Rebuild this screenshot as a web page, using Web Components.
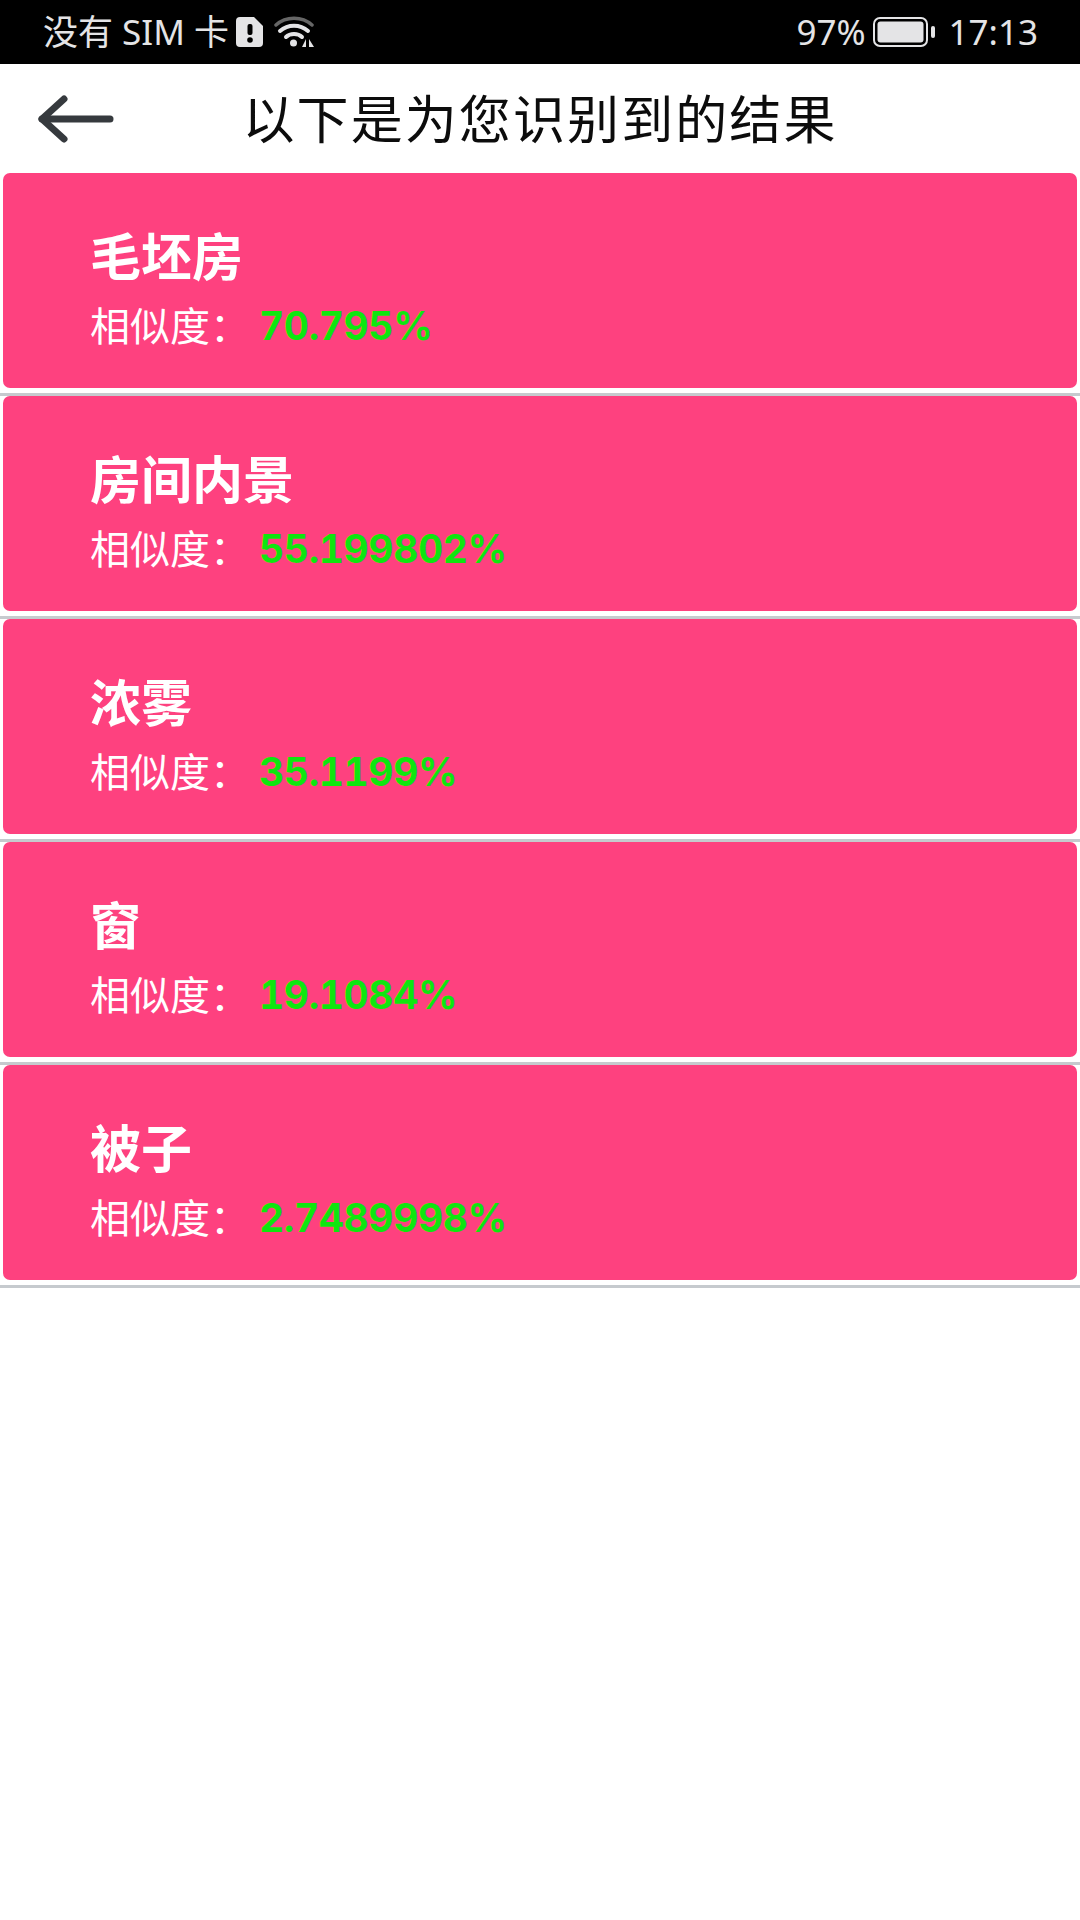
<!DOCTYPE html>
<html lang="zh-CN">
<head>
<meta charset="utf-8">
<style>
  html, body { margin: 0; padding: 0; background: #fff; }
  body { width: 1080px; min-height: 1920px; font-family: "Noto Sans", "Noto Sans CJK SC", sans-serif; }
</style>
</head>
<body>
<status-bar></status-bar>
<title-bar>以下是为您识别到的结果</title-bar>
<result-list>
  <result-item name="毛坯房" score="70.795%"></result-item>
  <result-item name="房间内景" score="55.199802%"></result-item>
  <result-item name="浓雾" score="35.1199%"></result-item>
  <result-item name="窗" score="19.1084%"></result-item>
  <result-item name="被子" score="2.7489998%"></result-item>
</result-list>
<script>
class StatusBar extends HTMLElement {
  constructor() {
    super();
    this.attachShadow({mode: 'open'});
  }

  connectedCallback() {
    this.shadowRoot.innerHTML = `
      <style>
        :host {
          display: flex;
          align-items: center;
          height: 64px;
          padding: 0 42px 0 43px;
          background: #000;
          color: #e4e4e6;
          font-size: 35px;
          line-height: 64px;
        }
        .left, .right { display: flex; align-items: center; }
        .right { margin-left: auto; }
        svg { display: block; }
        .sim { margin-left: 7px; }
        .wifi { margin-left: 10px; }
        .bat { margin: 0 14px 0 7px; }
      </style>
      <div class="left">
        <span>没有 SIM 卡</span>
        <svg class="sim" width="28" height="30" viewBox="0 0 28 30">
          <path d="M4 0H18L27 9V26a4 4 0 0 1-4 4H4a4 4 0 0 1-4-4V4a4 4 0 0 1 4-4Z" fill="#e4e4e6"/>
          <rect x="11.500" y="7" width="5" height="11" rx="2" fill="#000"/>
          <circle cx="14" cy="23" r="2.800" fill="#000"/>
        </svg>
        <svg class="wifi" width="42" height="32" viewBox="0 0 42 32" fill="none">
          <path d="M2 9C12 0 28 0 38 9" stroke="#666" stroke-width="3.500" stroke-linecap="round"/>
          <path d="M6 15C14 8 26 8 34 15" stroke="#e4e4e6" stroke-width="4" stroke-linecap="round"/>
          <path d="M12 21C16 17 24 17 28 21" stroke="#e4e4e6" stroke-width="4" stroke-linecap="round"/>
          <circle cx="19.500" cy="27" r="3.500" fill="#e4e4e6"/>
          <path d="M32 23V31H28Z" fill="#e4e4e6"/>
          <path d="M35 23V31H40Z" fill="#e4e4e6"/>
        </svg>
      </div>
      <div class="right">
        <span>97%</span>
        <svg class="bat" width="62" height="30" viewBox="0 0 62 30" fill="none">
          <rect x="1" y="1" width="53" height="28" rx="6" stroke="#e4e4e6" stroke-width="2"/>
          <rect x="4.500" y="4.500" width="46" height="21" rx="3" fill="#e4e4e6"/>
          <rect x="58" y="9" width="4" height="12" rx="2" fill="#e4e4e6"/>
        </svg>
        <span>17:13</span>
      </div>`;
  }
}

class TitleBar extends HTMLElement {
  constructor() {
    super();
    this.attachShadow({mode: 'open'});
  }

  connectedCallback() {
    this.shadowRoot.innerHTML = `
      <style>
        :host {
          display: grid;
          grid-template-columns: 1fr auto 1fr;
          align-items: center;
          height: 109px;
          background: #fff;
          color: #0c0c0c;
        }
        svg { display: block; margin-left: 38px; }
        .title { font-size: 52px; letter-spacing: 2.100px; line-height: 109px; }
      </style>
      <svg width="76" height="48" viewBox="0 0 76 48" fill="none" stroke="#363a3e" stroke-width="7" stroke-linecap="round" stroke-linejoin="round">
        <path d="M26 4L4 24L26 44"/>
        <path d="M4 24H72"/>
      </svg>
      <div class="title"><slot></slot></div>
      <div></div>`;
  }
}

class ResultList extends HTMLElement {
  constructor() {
    super();
    this.attachShadow({mode: 'open'});
  }

  connectedCallback() {
    this.shadowRoot.innerHTML = `
      <style>
        :host { display: block; }
      </style>
      <slot></slot>`;
  }
}

class ResultItem extends HTMLElement {
  constructor() {
    super();
    this.attachShadow({mode: 'open'});
  }

  connectedCallback() {
    this.shadowRoot.innerHTML = `
      <style>
        :host {
          display: block;
          height: 223px;
          box-sizing: border-box;
          border-bottom: 3px solid #c6cace;
          padding: 0 3px;
        }
        .card {
          box-sizing: border-box;
          height: 215px;
          padding: 53px 0 0 87px;
          background: #fe417f;
          border-radius: 7px;
          color: #fff;
        }
        .name { font-size: 51px; font-weight: 700; line-height: 60px; }
        .line { display: flex; align-items: center; margin-top: 13px; font-size: 40px; line-height: 54px; }
        .score {
          margin-left: 9px;
          color: #0fe60f;
          font-size: 39px;
          font-weight: 700;
          font-family: Inter, sans-serif;
          font-variant-numeric: tabular-nums;
          letter-spacing: -0.400px;
        }
      </style>
      <div class="card">
        <div class="name">${this.getAttribute('name')}</div>
        <div class="line"><span>相似度：</span><span class="score">${this.getAttribute('score')}</span></div>
      </div>`;
  }
}

customElements.define('status-bar', StatusBar);
customElements.define('title-bar', TitleBar);
customElements.define('result-list', ResultList);
customElements.define('result-item', ResultItem);
</script>
</body>
</html>
